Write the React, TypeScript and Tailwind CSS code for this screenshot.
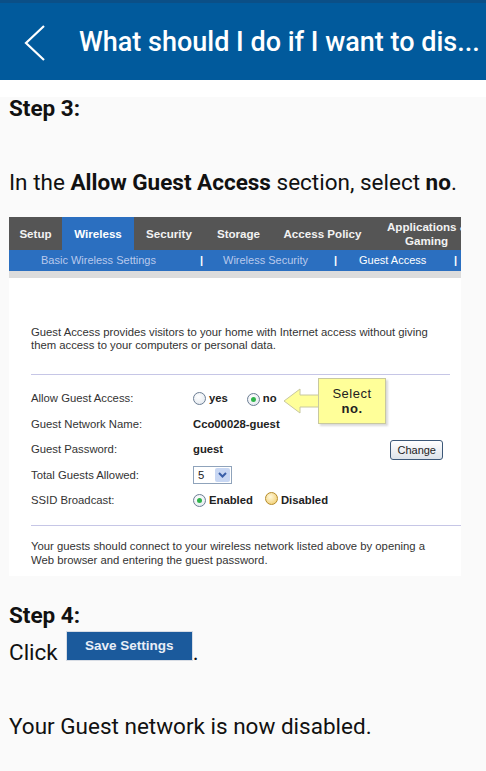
import React from "react";

const navItems = [
  { label: "Setup", active: false, w: "w-[53px]" },
  { label: "Wireless", active: true, w: "w-[72px]" },
  { label: "Security", active: false, w: "w-[70px]" },
  { label: "Storage", active: false, w: "w-[69px]" },
  { label: "Access Policy", active: false, w: "w-[99px]" },
];

function Radio({ checked, tone = "grey" }: { checked?: boolean; tone?: "grey" | "gold" }) {
  return (
    <span
      className={
        "inline-flex h-[13px] w-[13px] items-center justify-center rounded-full border " +
        (tone === "gold"
          ? "border-[#b58b2a] bg-[radial-gradient(circle_at_40%_35%,#fff8dc,#f0c860)]"
          : "border-[#6b7d93] bg-[radial-gradient(circle_at_40%_35%,#ffffff,#dfe5ec)]")
      }
    >
      {checked && <span className="h-[5px] w-[5px] rounded-full bg-[#2fb34a]" />}
    </span>
  );
}

function Row({ label, children }: { label: string; children: React.ReactNode }) {
  return (
    <div className="flex h-[25.5px] items-center">
      <div className="w-[162px] text-[#333]">{label}</div>
      <div className="flex flex-1 items-center">{children}</div>
    </div>
  );
}

function RouterShot() {
  return (
    <div className="mx-[9px] w-[452px] overflow-hidden bg-white font-['Liberation_Sans',Arial,sans-serif] text-[11.3px]">
      <div className="flex h-[33px] bg-[#555555] text-[11.6px] font-bold text-[#f2f2f2]">
        {navItems.map((n) => (
          <div
            key={n.label}
            className={
              "flex shrink-0 items-center justify-center " +
              n.w +
              (n.active ? " bg-[#2b6fc0] text-white" : "")
            }
          >
            {n.label}
          </div>
        ))}
        <div className="flex min-w-0 flex-1 flex-col justify-center overflow-hidden whitespace-nowrap pl-[15px] leading-[14px]">
          <span>Applications &amp;</span>
          <span className="pl-[18px]">Gaming</span>
        </div>
      </div>
      <div className="flex h-[21px] items-center bg-[#2b6fc0] text-[11px] text-[#b9c9ec]">
        <span className="ml-[32px] w-[159px]">Basic Wireless Settings</span>
        <span className="w-[23px] font-bold text-white">|</span>
        <span className="w-[111px]">Wireless Security</span>
        <span className="w-[25px] font-bold text-white">|</span>
        <span className="w-[95px] text-white">Guest Access</span>
        <span className="font-bold text-white">|</span>
      </div>
      <div className="h-[7px] bg-[#dcdcdc]" />
      <div className="flex">
        <div className="w-[22px]" />
        <div className="flex-1">
          <p className="mt-[48px] leading-[13px] text-[#333]">
            Guest Access provides visitors to your home with Internet access without giving
            <br />
            them access to your computers or personal data.
          </p>
          <div className="mt-[22px] mr-[11px] h-px bg-[#c6c6e6]" />
          <div className="relative mt-[11px]">
            <Row label="Allow Guest Access:">
              <Radio />
              <span className="ml-[3px] font-bold text-[#222]">yes</span>
              <span className="ml-[19px]">
                <Radio checked />
              </span>
              <span className="ml-[3px] font-bold text-[#222]">no</span>
            </Row>
            <Row label="Guest Network Name:">
              <span className="font-bold text-[#222]">Cco00028-guest</span>
            </Row>
            <Row label="Guest Password:">
              <span className="font-bold text-[#222]">guest</span>
              <span className="ml-auto mr-[18px] rounded-[3px] border border-[#3c5878] bg-[linear-gradient(#ffffff,#dde3ea)] px-[6px] py-[1px] text-[11px] text-[#222]">
                Change
              </span>
            </Row>
            <Row label="Total Guests Allowed:">
              <span className="flex h-[18px] w-[39px] items-center border border-[#8fa3bb] bg-white">
                <span className="flex-1 pl-[4px] text-[#222]">5</span>
                <span className="mr-px flex h-[14px] w-[15px] items-center justify-center rounded-[2px] bg-[#c8d7f3]">
                  <svg width="9" height="6" viewBox="0 0 9 6">
                    <path d="M1 1l3.5 3.5L8 1" fill="none" stroke="#3a5fa8" strokeWidth="2" />
                  </svg>
                </span>
              </span>
            </Row>
            <Row label="SSID Broadcast:">
              <Radio checked />
              <span className="ml-[3px] font-bold text-[#222]">Enabled</span>
              <span className="ml-[12px]">
                <Radio tone="gold" />
              </span>
              <span className="ml-[3px] font-bold text-[#222]">Disabled</span>
            </Row>
            <div className="absolute left-[252px] top-[-8px] flex items-center">
              <svg width="36" height="28" viewBox="0 0 36 28" className="-mr-px">
                <path d="M1 14 L17 2 L17 8 L36 8 L36 20 L17 20 L17 26 Z" fill="#ffff99" stroke="#c8c8a0" />
              </svg>
              <div className="flex h-[46px] w-[68px] flex-col items-center justify-center border border-[#c8c8a0] bg-[#ffff99] text-[13px] leading-[15px] tracking-[0.5px] text-[#222] shadow-[2px_2px_2px_rgba(0,0,0,0.15)]">
                <span>Select</span>
                <span className="font-bold">no.</span>
              </div>
            </div>
          </div>
          <div className="mt-[11px] h-px bg-[#c6c6e6]" />
          <p className="mt-[13px] pb-[9px] leading-[14px] text-[#333]">
            Your guests should connect to your wireless network listed above by opening a
            <br />
            Web browser and entering the guest password.
          </p>
        </div>
      </div>
    </div>
  );
}

export default function App() {
  return (
    <div className="min-h-[771px] w-[486px] bg-[#fafafa] font-['Roboto',sans-serif] text-[#111]">
      <div className="h-[3px] bg-[#0b4f87]" />
      <header className="flex h-[77px] items-center bg-[#015a9c] text-white">
        <svg width="22" height="36" viewBox="0 0 22 36" className="ml-[24px] mt-[2px]">
          <path d="M20 1 L2 18 L20 35" fill="none" stroke="white" strokeWidth="2.2" />
        </svg>
        <h1 className="ml-[33px] mt-[2px] whitespace-nowrap text-[27px] font-medium">
          What should I do if I want to dis...
        </h1>
      </header>
      <div className="h-[17px] bg-white" />
      <div className="px-[9px] text-[22.5px] leading-[37px]">
        <p className="-mt-[7px] font-bold">Step 3:</p>
        <p className="mt-[37px]">
          In the <b>Allow Guest Access</b> section, select <b>no</b>.
        </p>
      </div>
      <div className="mt-[16px]">
        <RouterShot />
      </div>
      <div className="mt-[21px] px-[9px] text-[22.5px] leading-[37px]">
        <p className="font-bold">Step 4:</p>
        <p className="flex items-end">
          <span>Click</span>
          <span className="-mt-[3px] mb-[10px] ml-[8px] flex h-[30px] w-[127px] items-center justify-center border border-[#d8dde5] bg-[#1b5a9c] font-['Liberation_Sans',Arial,sans-serif] text-[13.5px] font-bold leading-none text-[#e8eef7]">
            Save Settings
          </span>
          <span>.</span>
        </p>
        <p className="mt-[37px]">Your Guest network is now disabled.</p>
      </div>
    </div>
  );
}
